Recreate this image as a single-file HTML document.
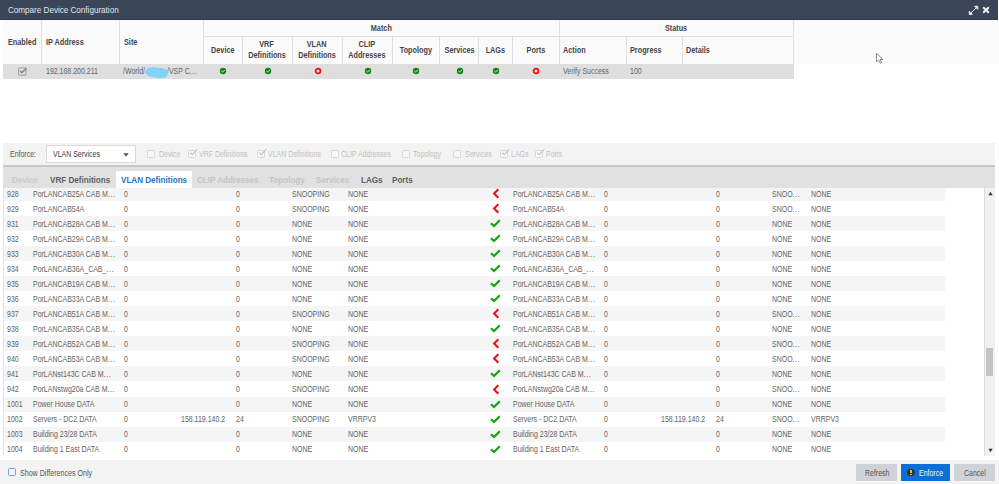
<!DOCTYPE html>
<html><head><meta charset="utf-8"><style>
html,body{margin:0;padding:0;width:999px;height:484px;overflow:hidden;background:#fff;font-family:"Liberation Sans",sans-serif;}
#root{position:relative;width:999px;height:484px;overflow:hidden;}
.abs{position:absolute;}
.t{position:absolute;line-height:20px;white-space:nowrap;transform:scaleX(0.8547);transform-origin:0 50%;}
.tc{position:absolute;line-height:20px;white-space:nowrap;text-align:center;}
.tc span{display:inline-block;transform:scaleX(0.8547);transform-origin:50% 50%;}
.el{font-style:normal;letter-spacing:0.7px;}
.vl{position:absolute;width:1px;background:#e0e0e0;}
.hl{position:absolute;height:1px;background:#e0e0e0;}
.ic{position:absolute;line-height:0;}
.ic svg{display:block;}
.cb{position:absolute;width:8px;height:8px;border:1px solid #d8d8d8;box-sizing:border-box;border-radius:1.5px;background:#f7f7f7;}
</style></head><body><div id="root">
<div class="abs" style="left:0;top:0;width:998px;height:20px;background:#3a4557"></div>
<div class="abs" style="left:0;top:19px;width:998px;height:1px;background:#343e4e"></div>
<span class="t" style="left:7.8px;top:-0.40px;font-size:9.48px;font-weight:normal;color:#e2e5e9;">Compare Device Configuration</span>
<svg class="abs" style="left:968px;top:4px" width="11" height="12" viewBox="0 0 11 12"><path d="M2.6 9.4 L8.4 3.6" stroke="#e8eaed" stroke-width="1"/><path d="M6.6 2.2 L9.8 2.2 L9.8 5.4 Z" fill="#eef0f2" stroke="#eef0f2" stroke-width="0.8" stroke-linejoin="round"/><path d="M1.2 7.2 L1.2 10.4 L4.4 10.4 Z" fill="#eef0f2" stroke="#eef0f2" stroke-width="0.8" stroke-linejoin="round"/></svg>
<svg class="abs" style="left:982px;top:6px" width="8" height="8" viewBox="0 0 8 8"><path d="M1.2 1.2 L6.8 6.8 M6.8 1.2 L1.2 6.8" stroke="#f2f2f2" stroke-width="2"/></svg>
<div class="abs" style="left:3px;top:20px;width:996px;height:43.5px;background:#fafafa"></div>
<div class="vl" style="left:41px;top:20px;height:43.5px"></div>
<div class="vl" style="left:119px;top:20px;height:43.5px"></div>
<div class="vl" style="left:203px;top:20px;height:43.5px"></div>
<div class="vl" style="left:559px;top:20px;height:43.5px"></div>
<div class="vl" style="left:793px;top:20px;height:58.5px"></div>
<div class="hl" style="left:203px;top:36px;width:590px"></div>
<div class="vl" style="left:242px;top:36px;height:27.5px"></div>
<div class="vl" style="left:292px;top:36px;height:27.5px"></div>
<div class="vl" style="left:342px;top:36px;height:27.5px"></div>
<div class="vl" style="left:392px;top:36px;height:27.5px"></div>
<div class="vl" style="left:439px;top:36px;height:27.5px"></div>
<div class="vl" style="left:478px;top:36px;height:27.5px"></div>
<div class="vl" style="left:512px;top:36px;height:27.5px"></div>
<div class="vl" style="left:626px;top:36px;height:27.5px"></div>
<div class="vl" style="left:682px;top:36px;height:27.5px"></div>
<div class="abs" style="left:3px;top:63.5px;width:790.5px;height:15px;background:#dedede"></div>
<span class="t" style="left:8px;top:31.50px;font-size:8.54px;font-weight:bold;color:#454545;">Enabled</span><span class="t" style="left:45.5px;top:31.50px;font-size:8.54px;font-weight:bold;color:#454545;">IP Address</span><span class="t" style="left:123.5px;top:31.50px;font-size:8.54px;font-weight:bold;color:#454545;">Site</span><span class="tc" style="left:203px;width:356px;top:18.00px;font-size:8.54px;font-weight:bold;color:#454545"><span>Match</span></span><span class="tc" style="left:559px;width:234px;top:18.00px;font-size:8.54px;font-weight:bold;color:#454545"><span>Status</span></span><span class="tc" style="left:203px;width:39px;top:40.00px;font-size:8.54px;font-weight:bold;color:#454545"><span>Device</span></span><span class="tc" style="left:242px;width:50px;top:34.00px;font-size:8.54px;font-weight:bold;color:#454545"><span>VRF</span></span><span class="tc" style="left:242px;width:50px;top:44.60px;font-size:8.54px;font-weight:bold;color:#454545"><span>Definitions</span></span><span class="tc" style="left:292px;width:50px;top:34.00px;font-size:8.54px;font-weight:bold;color:#454545"><span>VLAN</span></span><span class="tc" style="left:292px;width:50px;top:44.60px;font-size:8.54px;font-weight:bold;color:#454545"><span>Definitions</span></span><span class="tc" style="left:342px;width:50px;top:34.00px;font-size:8.54px;font-weight:bold;color:#454545"><span>CLIP</span></span><span class="tc" style="left:342px;width:50px;top:44.60px;font-size:8.54px;font-weight:bold;color:#454545"><span>Addresses</span></span><span class="tc" style="left:392px;width:47px;top:40.00px;font-size:8.54px;font-weight:bold;color:#454545"><span>Topology</span></span><span class="tc" style="left:440px;width:39px;top:40.00px;font-size:8.54px;font-weight:bold;color:#454545"><span>Services</span></span><span class="tc" style="left:479px;width:33px;top:40.00px;font-size:8.54px;font-weight:bold;color:#454545"><span>LAGs</span></span><span class="tc" style="left:512px;width:47px;top:40.00px;font-size:8.54px;font-weight:bold;color:#454545"><span>Ports</span></span><span class="t" style="left:563px;top:40.00px;font-size:8.54px;font-weight:bold;color:#454545;">Action</span><span class="t" style="left:630px;top:40.00px;font-size:8.54px;font-weight:bold;color:#454545;">Progress</span><span class="t" style="left:686px;top:40.00px;font-size:8.54px;font-weight:bold;color:#454545;">Details</span><span class="t" style="left:45.5px;top:61.60px;font-size:8.19px;font-weight:normal;color:#646464;">192.168.200.211</span><span class="t" style="left:123px;top:61.60px;font-size:8.19px;font-weight:normal;color:#646464;">/World/</span><span class="t" style="left:167px;top:61.60px;font-size:8.19px;font-weight:normal;color:#646464;">/VSP C<i class="el">...</i></span><span class="t" style="left:563px;top:61.60px;font-size:8.19px;font-weight:normal;color:#646464;">Verify Success</span><span class="t" style="left:630px;top:61.60px;font-size:8.19px;font-weight:normal;color:#646464;">100</span>
<svg class="abs" style="left:17.5px;top:66.5px" width="10" height="9" viewBox="0 0 10 9"><rect x="0.6" y="0.9" width="7.4" height="7.4" rx="1" fill="none" stroke="#9c9c9c" stroke-width="1"/><path d="M2.1 3.9 L3.9 5.7 L8.5 1.1" fill="none" stroke="#858585" stroke-width="1.5"/></svg>
<svg class="abs" style="left:144px;top:65.5px" width="25" height="13" viewBox="0 0 25 13"><path d="M2.5 3.6 C3.5 1.2 8 0.8 12 1.4 C16.5 2 21 2.2 23 4.2 C24.6 6 24 9.6 21.5 11 C18.5 12.4 14 12 9.5 11.2 C5 10.4 1.2 8.6 1.3 6 C1.3 5 1.8 4.2 2.5 3.6 Z" fill="#80d2fb"/></svg>
<span class="ic" style="left:219.2px;top:67px"><svg width="8" height="8" viewBox="0 0 8 8"><circle cx="4" cy="4" r="3.2" fill="#0f8a12"/><path d="M2.4 4.1 L3.6 5.1 L5.7 3" fill="none" stroke="#e8f3e8" stroke-width="0.9"/></svg></span><span class="ic" style="left:263.5px;top:67px"><svg width="8" height="8" viewBox="0 0 8 8"><circle cx="4" cy="4" r="3.2" fill="#0f8a12"/><path d="M2.4 4.1 L3.6 5.1 L5.7 3" fill="none" stroke="#e8f3e8" stroke-width="0.9"/></svg></span><span class="ic" style="left:313.6px;top:67px"><svg width="8" height="8" viewBox="0 0 8 8"><circle cx="4" cy="4" r="2.45" fill="none" stroke="#f01010" stroke-width="1.7"/></svg></span><span class="ic" style="left:363.6px;top:67px"><svg width="8" height="8" viewBox="0 0 8 8"><circle cx="4" cy="4" r="3.2" fill="#0f8a12"/><path d="M2.4 4.1 L3.6 5.1 L5.7 3" fill="none" stroke="#e8f3e8" stroke-width="0.9"/></svg></span><span class="ic" style="left:412.0px;top:67px"><svg width="8" height="8" viewBox="0 0 8 8"><circle cx="4" cy="4" r="3.2" fill="#0f8a12"/><path d="M2.4 4.1 L3.6 5.1 L5.7 3" fill="none" stroke="#e8f3e8" stroke-width="0.9"/></svg></span><span class="ic" style="left:455.5px;top:67px"><svg width="8" height="8" viewBox="0 0 8 8"><circle cx="4" cy="4" r="3.2" fill="#0f8a12"/><path d="M2.4 4.1 L3.6 5.1 L5.7 3" fill="none" stroke="#e8f3e8" stroke-width="0.9"/></svg></span><span class="ic" style="left:492.0px;top:67px"><svg width="8" height="8" viewBox="0 0 8 8"><circle cx="4" cy="4" r="3.2" fill="#0f8a12"/><path d="M2.4 4.1 L3.6 5.1 L5.7 3" fill="none" stroke="#e8f3e8" stroke-width="0.9"/></svg></span><span class="ic" style="left:532.0px;top:67px"><svg width="8" height="8" viewBox="0 0 8 8"><circle cx="4" cy="4" r="2.45" fill="none" stroke="#f01010" stroke-width="1.7"/></svg></span>
<svg class="abs" style="left:875.8px;top:52.8px" width="8" height="11" viewBox="0 0 8 11"><path d="M0.5 0.5 L0.5 9 L2.7 7 L4.3 10.3 L5.6 9.7 L4.1 6.5 L7 6.5 Z" fill="#fff" stroke="#707070" stroke-width="0.8"/></svg>

<div class="abs" style="left:3px;top:143px;width:992px;height:21.5px;background:#f3f3f3"></div>
<span class="t" style="left:10px;top:144.80px;font-size:8.19px;font-weight:normal;color:#555;">Enforce:</span>
<div class="abs" style="left:46px;top:145.3px;width:89.5px;height:17.6px;background:#fff;border:1px solid #dadada;box-sizing:border-box"></div>
<span class="t" style="left:52.5px;top:145.00px;font-size:8.19px;font-weight:normal;color:#3a3a3a;">VLAN Services</span>
<svg class="abs" style="left:123px;top:152.5px" width="6" height="4" viewBox="0 0 6 4"><path d="M0.2 0.2 L5.8 0.2 L3 3.4 Z" fill="#505050"/></svg>
<div class="cb" style="left:147px;top:149.6px"></div><span class="t" style="left:159px;top:145.00px;font-size:8.19px;font-weight:normal;color:#c2c2c2;">Device</span><div class="cb" style="left:188px;top:149.6px"></div><svg class="abs" style="left:189px;top:147.6px" width="9" height="9" viewBox="0 0 9 9"><path d="M1.2 4.6 L3.2 6.6 L8.4 1.2" fill="none" stroke="#c4c4c4" stroke-width="1.1"/></svg><span class="t" style="left:199px;top:145.00px;font-size:8.19px;font-weight:normal;color:#c2c2c2;">VRF Definitions</span><div class="cb" style="left:256.5px;top:149.6px"></div><svg class="abs" style="left:257.5px;top:147.6px" width="9" height="9" viewBox="0 0 9 9"><path d="M1.2 4.6 L3.2 6.6 L8.4 1.2" fill="none" stroke="#c4c4c4" stroke-width="1.1"/></svg><span class="t" style="left:268px;top:145.00px;font-size:8.19px;font-weight:normal;color:#c2c2c2;">VLAN Definitions</span><div class="cb" style="left:330.5px;top:149.6px"></div><span class="t" style="left:341px;top:145.00px;font-size:8.19px;font-weight:normal;color:#c2c2c2;">CLIP Addresses</span><div class="cb" style="left:402px;top:149.6px"></div><span class="t" style="left:413px;top:145.00px;font-size:8.19px;font-weight:normal;color:#c2c2c2;">Topology</span><div class="cb" style="left:453px;top:149.6px"></div><span class="t" style="left:465px;top:145.00px;font-size:8.19px;font-weight:normal;color:#c2c2c2;">Services</span><div class="cb" style="left:499.5px;top:149.6px"></div><svg class="abs" style="left:500.5px;top:147.6px" width="9" height="9" viewBox="0 0 9 9"><path d="M1.2 4.6 L3.2 6.6 L8.4 1.2" fill="none" stroke="#c4c4c4" stroke-width="1.1"/></svg><span class="t" style="left:511px;top:145.00px;font-size:8.19px;font-weight:normal;color:#c2c2c2;">LAGs</span><div class="cb" style="left:534.5px;top:149.6px"></div><svg class="abs" style="left:535.5px;top:147.6px" width="9" height="9" viewBox="0 0 9 9"><path d="M1.2 4.6 L3.2 6.6 L8.4 1.2" fill="none" stroke="#c4c4c4" stroke-width="1.1"/></svg><span class="t" style="left:546px;top:145.00px;font-size:8.19px;font-weight:normal;color:#c2c2c2;">Ports</span>
<div class="abs" style="left:3px;top:164.5px;width:992px;height:2.2px;background:#c9c9c9"></div>
<div class="abs" style="left:3px;top:166.7px;width:992px;height:21.3px;background:#e1e1e1"></div>
<div class="abs" style="left:116px;top:170.5px;width:76px;height:17.5px;background:#fff"></div><span class="t" style="left:12px;top:169.50px;font-size:9.48px;font-weight:bold;color:#c9c9c9;">Device</span><span class="t" style="left:49.5px;top:169.50px;font-size:9.48px;font-weight:bold;color:#5e5e5e;">VRF Definitions</span><span class="t" style="left:121px;top:169.50px;font-size:9.48px;font-weight:bold;color:#1a72ca;">VLAN Definitions</span><span class="t" style="left:197px;top:169.50px;font-size:9.48px;font-weight:bold;color:#c4c4c4;">CLIP Addresses</span><span class="t" style="left:269px;top:169.50px;font-size:9.48px;font-weight:bold;color:#c4c4c4;">Topology</span><span class="t" style="left:316px;top:169.50px;font-size:9.48px;font-weight:bold;color:#c4c4c4;">Services</span><span class="t" style="left:361px;top:169.50px;font-size:9.48px;font-weight:bold;color:#5e5e5e;">LAGs</span><span class="t" style="left:392px;top:169.50px;font-size:9.48px;font-weight:bold;color:#5e5e5e;">Ports</span>
<div class="abs" style="left:0;top:188px;width:999px;height:271.5px;overflow:hidden">
<div class="abs" style="left:0;top:-188px;width:999px;height:484px">
<div class="abs" style="left:3px;top:186px;width:992px;height:270px;background:#fff"></div>
<div class="abs" style="left:3px;top:186.0px;width:942px;height:15px;background:#f5f5f5"></div><span class="t" style="left:6.5px;top:184.60px;font-size:8.19px;font-weight:normal;color:#646464;">928</span><span class="t" style="left:32.5px;top:184.60px;font-size:8.19px;font-weight:normal;color:#646464;">PorLANCAB25A CAB M<i class="el">...</i></span><span class="t" style="left:124.0px;top:184.60px;font-size:8.19px;font-weight:normal;color:#646464;">0</span><span class="t" style="left:236px;top:184.60px;font-size:8.19px;font-weight:normal;color:#646464;">0</span><span class="t" style="left:292px;top:184.60px;font-size:8.19px;font-weight:normal;color:#646464;">SNOOPING</span><span class="t" style="left:347.5px;top:184.60px;font-size:8.19px;font-weight:normal;color:#646464;">NONE</span><span class="t" style="left:512.5px;top:184.60px;font-size:8.19px;font-weight:normal;color:#646464;">PorLANCAB25A CAB M<i class="el">...</i></span><span class="t" style="left:604.48px;top:184.60px;font-size:8.19px;font-weight:normal;color:#646464;">0</span><span class="t" style="left:716px;top:184.60px;font-size:8.19px;font-weight:normal;color:#646464;">0</span><span class="t" style="left:772px;top:184.60px;font-size:8.19px;font-weight:normal;color:#646464;">SNOO<i class="el">...</i></span><span class="t" style="left:810.5px;top:184.60px;font-size:8.19px;font-weight:normal;color:#646464;">NONE</span><span class="ic" style="left:492px;top:188.0px"><svg width="8" height="11" viewBox="0 0 8 11"><path d="M6.3 1.2 L2.1 5.5 L6.3 9.8" fill="none" stroke="#ee1111" stroke-width="2.1" stroke-linejoin="miter"/></svg></span><div class="abs" style="left:3px;top:201.04px;width:942px;height:15px;background:#ffffff"></div><span class="t" style="left:6.5px;top:199.64px;font-size:8.19px;font-weight:normal;color:#646464;">929</span><span class="t" style="left:32.5px;top:199.64px;font-size:8.19px;font-weight:normal;color:#646464;">PorLANCAB54A</span><span class="t" style="left:124.0px;top:199.64px;font-size:8.19px;font-weight:normal;color:#646464;">0</span><span class="t" style="left:236px;top:199.64px;font-size:8.19px;font-weight:normal;color:#646464;">0</span><span class="t" style="left:292px;top:199.64px;font-size:8.19px;font-weight:normal;color:#646464;">SNOOPING</span><span class="t" style="left:347.5px;top:199.64px;font-size:8.19px;font-weight:normal;color:#646464;">NONE</span><span class="t" style="left:512.5px;top:199.64px;font-size:8.19px;font-weight:normal;color:#646464;">PorLANCAB54A</span><span class="t" style="left:604.48px;top:199.64px;font-size:8.19px;font-weight:normal;color:#646464;">0</span><span class="t" style="left:716px;top:199.64px;font-size:8.19px;font-weight:normal;color:#646464;">0</span><span class="t" style="left:772px;top:199.64px;font-size:8.19px;font-weight:normal;color:#646464;">SNOO<i class="el">...</i></span><span class="t" style="left:810.5px;top:199.64px;font-size:8.19px;font-weight:normal;color:#646464;">NONE</span><span class="ic" style="left:492px;top:203.04px"><svg width="8" height="11" viewBox="0 0 8 11"><path d="M6.3 1.2 L2.1 5.5 L6.3 9.8" fill="none" stroke="#ee1111" stroke-width="2.1" stroke-linejoin="miter"/></svg></span><div class="abs" style="left:3px;top:216.08px;width:942px;height:15px;background:#f5f5f5"></div><span class="t" style="left:6.5px;top:214.68px;font-size:8.19px;font-weight:normal;color:#646464;">931</span><span class="t" style="left:32.5px;top:214.68px;font-size:8.19px;font-weight:normal;color:#646464;">PorLANCAB28A CAB M<i class="el">...</i></span><span class="t" style="left:124.0px;top:214.68px;font-size:8.19px;font-weight:normal;color:#646464;">0</span><span class="t" style="left:236px;top:214.68px;font-size:8.19px;font-weight:normal;color:#646464;">0</span><span class="t" style="left:292px;top:214.68px;font-size:8.19px;font-weight:normal;color:#646464;">NONE</span><span class="t" style="left:347.5px;top:214.68px;font-size:8.19px;font-weight:normal;color:#646464;">NONE</span><span class="t" style="left:512.5px;top:214.68px;font-size:8.19px;font-weight:normal;color:#646464;">PorLANCAB28A CAB M<i class="el">...</i></span><span class="t" style="left:604.48px;top:214.68px;font-size:8.19px;font-weight:normal;color:#646464;">0</span><span class="t" style="left:716px;top:214.68px;font-size:8.19px;font-weight:normal;color:#646464;">0</span><span class="t" style="left:772px;top:214.68px;font-size:8.19px;font-weight:normal;color:#646464;">NONE</span><span class="t" style="left:810.5px;top:214.68px;font-size:8.19px;font-weight:normal;color:#646464;">NONE</span><span class="ic" style="left:490px;top:219.08px"><svg width="11" height="9" viewBox="0 0 11 9"><path d="M1 4.3 L4 7 L9.8 1.3" fill="none" stroke="#13a313" stroke-width="2.2"/></svg></span><div class="abs" style="left:3px;top:231.12px;width:942px;height:15px;background:#ffffff"></div><span class="t" style="left:6.5px;top:229.72px;font-size:8.19px;font-weight:normal;color:#646464;">932</span><span class="t" style="left:32.5px;top:229.72px;font-size:8.19px;font-weight:normal;color:#646464;">PorLANCAB29A CAB M<i class="el">...</i></span><span class="t" style="left:124.0px;top:229.72px;font-size:8.19px;font-weight:normal;color:#646464;">0</span><span class="t" style="left:236px;top:229.72px;font-size:8.19px;font-weight:normal;color:#646464;">0</span><span class="t" style="left:292px;top:229.72px;font-size:8.19px;font-weight:normal;color:#646464;">NONE</span><span class="t" style="left:347.5px;top:229.72px;font-size:8.19px;font-weight:normal;color:#646464;">NONE</span><span class="t" style="left:512.5px;top:229.72px;font-size:8.19px;font-weight:normal;color:#646464;">PorLANCAB29A CAB M<i class="el">...</i></span><span class="t" style="left:604.48px;top:229.72px;font-size:8.19px;font-weight:normal;color:#646464;">0</span><span class="t" style="left:716px;top:229.72px;font-size:8.19px;font-weight:normal;color:#646464;">0</span><span class="t" style="left:772px;top:229.72px;font-size:8.19px;font-weight:normal;color:#646464;">NONE</span><span class="t" style="left:810.5px;top:229.72px;font-size:8.19px;font-weight:normal;color:#646464;">NONE</span><span class="ic" style="left:490px;top:234.12px"><svg width="11" height="9" viewBox="0 0 11 9"><path d="M1 4.3 L4 7 L9.8 1.3" fill="none" stroke="#13a313" stroke-width="2.2"/></svg></span><div class="abs" style="left:3px;top:246.16px;width:942px;height:15px;background:#f5f5f5"></div><span class="t" style="left:6.5px;top:244.76px;font-size:8.19px;font-weight:normal;color:#646464;">933</span><span class="t" style="left:32.5px;top:244.76px;font-size:8.19px;font-weight:normal;color:#646464;">PorLANCAB30A CAB M<i class="el">...</i></span><span class="t" style="left:124.0px;top:244.76px;font-size:8.19px;font-weight:normal;color:#646464;">0</span><span class="t" style="left:236px;top:244.76px;font-size:8.19px;font-weight:normal;color:#646464;">0</span><span class="t" style="left:292px;top:244.76px;font-size:8.19px;font-weight:normal;color:#646464;">NONE</span><span class="t" style="left:347.5px;top:244.76px;font-size:8.19px;font-weight:normal;color:#646464;">NONE</span><span class="t" style="left:512.5px;top:244.76px;font-size:8.19px;font-weight:normal;color:#646464;">PorLANCAB30A CAB M<i class="el">...</i></span><span class="t" style="left:604.48px;top:244.76px;font-size:8.19px;font-weight:normal;color:#646464;">0</span><span class="t" style="left:716px;top:244.76px;font-size:8.19px;font-weight:normal;color:#646464;">0</span><span class="t" style="left:772px;top:244.76px;font-size:8.19px;font-weight:normal;color:#646464;">NONE</span><span class="t" style="left:810.5px;top:244.76px;font-size:8.19px;font-weight:normal;color:#646464;">NONE</span><span class="ic" style="left:490px;top:249.16px"><svg width="11" height="9" viewBox="0 0 11 9"><path d="M1 4.3 L4 7 L9.8 1.3" fill="none" stroke="#13a313" stroke-width="2.2"/></svg></span><div class="abs" style="left:3px;top:261.2px;width:942px;height:15px;background:#ffffff"></div><span class="t" style="left:6.5px;top:259.80px;font-size:8.19px;font-weight:normal;color:#646464;">934</span><span class="t" style="left:32.5px;top:259.80px;font-size:8.19px;font-weight:normal;color:#646464;">PorLANCAB36A_CAB_<i class="el">...</i></span><span class="t" style="left:124.0px;top:259.80px;font-size:8.19px;font-weight:normal;color:#646464;">0</span><span class="t" style="left:236px;top:259.80px;font-size:8.19px;font-weight:normal;color:#646464;">0</span><span class="t" style="left:292px;top:259.80px;font-size:8.19px;font-weight:normal;color:#646464;">NONE</span><span class="t" style="left:347.5px;top:259.80px;font-size:8.19px;font-weight:normal;color:#646464;">NONE</span><span class="t" style="left:512.5px;top:259.80px;font-size:8.19px;font-weight:normal;color:#646464;">PorLANCAB36A_CAB_<i class="el">...</i></span><span class="t" style="left:604.48px;top:259.80px;font-size:8.19px;font-weight:normal;color:#646464;">0</span><span class="t" style="left:716px;top:259.80px;font-size:8.19px;font-weight:normal;color:#646464;">0</span><span class="t" style="left:772px;top:259.80px;font-size:8.19px;font-weight:normal;color:#646464;">NONE</span><span class="t" style="left:810.5px;top:259.80px;font-size:8.19px;font-weight:normal;color:#646464;">NONE</span><span class="ic" style="left:490px;top:264.2px"><svg width="11" height="9" viewBox="0 0 11 9"><path d="M1 4.3 L4 7 L9.8 1.3" fill="none" stroke="#13a313" stroke-width="2.2"/></svg></span><div class="abs" style="left:3px;top:276.24px;width:942px;height:15px;background:#f5f5f5"></div><span class="t" style="left:6.5px;top:274.84px;font-size:8.19px;font-weight:normal;color:#646464;">935</span><span class="t" style="left:32.5px;top:274.84px;font-size:8.19px;font-weight:normal;color:#646464;">PorLANCAB19A CAB M<i class="el">...</i></span><span class="t" style="left:124.0px;top:274.84px;font-size:8.19px;font-weight:normal;color:#646464;">0</span><span class="t" style="left:236px;top:274.84px;font-size:8.19px;font-weight:normal;color:#646464;">0</span><span class="t" style="left:292px;top:274.84px;font-size:8.19px;font-weight:normal;color:#646464;">NONE</span><span class="t" style="left:347.5px;top:274.84px;font-size:8.19px;font-weight:normal;color:#646464;">NONE</span><span class="t" style="left:512.5px;top:274.84px;font-size:8.19px;font-weight:normal;color:#646464;">PorLANCAB19A CAB M<i class="el">...</i></span><span class="t" style="left:604.48px;top:274.84px;font-size:8.19px;font-weight:normal;color:#646464;">0</span><span class="t" style="left:716px;top:274.84px;font-size:8.19px;font-weight:normal;color:#646464;">0</span><span class="t" style="left:772px;top:274.84px;font-size:8.19px;font-weight:normal;color:#646464;">NONE</span><span class="t" style="left:810.5px;top:274.84px;font-size:8.19px;font-weight:normal;color:#646464;">NONE</span><span class="ic" style="left:490px;top:279.24px"><svg width="11" height="9" viewBox="0 0 11 9"><path d="M1 4.3 L4 7 L9.8 1.3" fill="none" stroke="#13a313" stroke-width="2.2"/></svg></span><div class="abs" style="left:3px;top:291.28px;width:942px;height:15px;background:#ffffff"></div><span class="t" style="left:6.5px;top:289.88px;font-size:8.19px;font-weight:normal;color:#646464;">936</span><span class="t" style="left:32.5px;top:289.88px;font-size:8.19px;font-weight:normal;color:#646464;">PorLANCAB33A CAB M<i class="el">...</i></span><span class="t" style="left:124.0px;top:289.88px;font-size:8.19px;font-weight:normal;color:#646464;">0</span><span class="t" style="left:236px;top:289.88px;font-size:8.19px;font-weight:normal;color:#646464;">0</span><span class="t" style="left:292px;top:289.88px;font-size:8.19px;font-weight:normal;color:#646464;">NONE</span><span class="t" style="left:347.5px;top:289.88px;font-size:8.19px;font-weight:normal;color:#646464;">NONE</span><span class="t" style="left:512.5px;top:289.88px;font-size:8.19px;font-weight:normal;color:#646464;">PorLANCAB33A CAB M<i class="el">...</i></span><span class="t" style="left:604.48px;top:289.88px;font-size:8.19px;font-weight:normal;color:#646464;">0</span><span class="t" style="left:716px;top:289.88px;font-size:8.19px;font-weight:normal;color:#646464;">0</span><span class="t" style="left:772px;top:289.88px;font-size:8.19px;font-weight:normal;color:#646464;">NONE</span><span class="t" style="left:810.5px;top:289.88px;font-size:8.19px;font-weight:normal;color:#646464;">NONE</span><span class="ic" style="left:490px;top:294.28px"><svg width="11" height="9" viewBox="0 0 11 9"><path d="M1 4.3 L4 7 L9.8 1.3" fill="none" stroke="#13a313" stroke-width="2.2"/></svg></span><div class="abs" style="left:3px;top:306.32px;width:942px;height:15px;background:#f5f5f5"></div><span class="t" style="left:6.5px;top:304.92px;font-size:8.19px;font-weight:normal;color:#646464;">937</span><span class="t" style="left:32.5px;top:304.92px;font-size:8.19px;font-weight:normal;color:#646464;">PorLANCAB51A CAB M<i class="el">...</i></span><span class="t" style="left:124.0px;top:304.92px;font-size:8.19px;font-weight:normal;color:#646464;">0</span><span class="t" style="left:236px;top:304.92px;font-size:8.19px;font-weight:normal;color:#646464;">0</span><span class="t" style="left:292px;top:304.92px;font-size:8.19px;font-weight:normal;color:#646464;">SNOOPING</span><span class="t" style="left:347.5px;top:304.92px;font-size:8.19px;font-weight:normal;color:#646464;">NONE</span><span class="t" style="left:512.5px;top:304.92px;font-size:8.19px;font-weight:normal;color:#646464;">PorLANCAB51A CAB M<i class="el">...</i></span><span class="t" style="left:604.48px;top:304.92px;font-size:8.19px;font-weight:normal;color:#646464;">0</span><span class="t" style="left:716px;top:304.92px;font-size:8.19px;font-weight:normal;color:#646464;">0</span><span class="t" style="left:772px;top:304.92px;font-size:8.19px;font-weight:normal;color:#646464;">SNOO<i class="el">...</i></span><span class="t" style="left:810.5px;top:304.92px;font-size:8.19px;font-weight:normal;color:#646464;">NONE</span><span class="ic" style="left:492px;top:308.32px"><svg width="8" height="11" viewBox="0 0 8 11"><path d="M6.3 1.2 L2.1 5.5 L6.3 9.8" fill="none" stroke="#ee1111" stroke-width="2.1" stroke-linejoin="miter"/></svg></span><div class="abs" style="left:3px;top:321.36px;width:942px;height:15px;background:#ffffff"></div><span class="t" style="left:6.5px;top:319.96px;font-size:8.19px;font-weight:normal;color:#646464;">938</span><span class="t" style="left:32.5px;top:319.96px;font-size:8.19px;font-weight:normal;color:#646464;">PorLANCAB35A CAB M<i class="el">...</i></span><span class="t" style="left:124.0px;top:319.96px;font-size:8.19px;font-weight:normal;color:#646464;">0</span><span class="t" style="left:236px;top:319.96px;font-size:8.19px;font-weight:normal;color:#646464;">0</span><span class="t" style="left:292px;top:319.96px;font-size:8.19px;font-weight:normal;color:#646464;">NONE</span><span class="t" style="left:347.5px;top:319.96px;font-size:8.19px;font-weight:normal;color:#646464;">NONE</span><span class="t" style="left:512.5px;top:319.96px;font-size:8.19px;font-weight:normal;color:#646464;">PorLANCAB35A CAB M<i class="el">...</i></span><span class="t" style="left:604.48px;top:319.96px;font-size:8.19px;font-weight:normal;color:#646464;">0</span><span class="t" style="left:716px;top:319.96px;font-size:8.19px;font-weight:normal;color:#646464;">0</span><span class="t" style="left:772px;top:319.96px;font-size:8.19px;font-weight:normal;color:#646464;">NONE</span><span class="t" style="left:810.5px;top:319.96px;font-size:8.19px;font-weight:normal;color:#646464;">NONE</span><span class="ic" style="left:490px;top:324.36px"><svg width="11" height="9" viewBox="0 0 11 9"><path d="M1 4.3 L4 7 L9.8 1.3" fill="none" stroke="#13a313" stroke-width="2.2"/></svg></span><div class="abs" style="left:3px;top:336.4px;width:942px;height:15px;background:#f5f5f5"></div><span class="t" style="left:6.5px;top:335.00px;font-size:8.19px;font-weight:normal;color:#646464;">939</span><span class="t" style="left:32.5px;top:335.00px;font-size:8.19px;font-weight:normal;color:#646464;">PorLANCAB52A CAB M<i class="el">...</i></span><span class="t" style="left:124.0px;top:335.00px;font-size:8.19px;font-weight:normal;color:#646464;">0</span><span class="t" style="left:236px;top:335.00px;font-size:8.19px;font-weight:normal;color:#646464;">0</span><span class="t" style="left:292px;top:335.00px;font-size:8.19px;font-weight:normal;color:#646464;">SNOOPING</span><span class="t" style="left:347.5px;top:335.00px;font-size:8.19px;font-weight:normal;color:#646464;">NONE</span><span class="t" style="left:512.5px;top:335.00px;font-size:8.19px;font-weight:normal;color:#646464;">PorLANCAB52A CAB M<i class="el">...</i></span><span class="t" style="left:604.48px;top:335.00px;font-size:8.19px;font-weight:normal;color:#646464;">0</span><span class="t" style="left:716px;top:335.00px;font-size:8.19px;font-weight:normal;color:#646464;">0</span><span class="t" style="left:772px;top:335.00px;font-size:8.19px;font-weight:normal;color:#646464;">SNOO<i class="el">...</i></span><span class="t" style="left:810.5px;top:335.00px;font-size:8.19px;font-weight:normal;color:#646464;">NONE</span><span class="ic" style="left:492px;top:338.4px"><svg width="8" height="11" viewBox="0 0 8 11"><path d="M6.3 1.2 L2.1 5.5 L6.3 9.8" fill="none" stroke="#ee1111" stroke-width="2.1" stroke-linejoin="miter"/></svg></span><div class="abs" style="left:3px;top:351.44px;width:942px;height:15px;background:#ffffff"></div><span class="t" style="left:6.5px;top:350.04px;font-size:8.19px;font-weight:normal;color:#646464;">940</span><span class="t" style="left:32.5px;top:350.04px;font-size:8.19px;font-weight:normal;color:#646464;">PorLANCAB53A CAB M<i class="el">...</i></span><span class="t" style="left:124.0px;top:350.04px;font-size:8.19px;font-weight:normal;color:#646464;">0</span><span class="t" style="left:236px;top:350.04px;font-size:8.19px;font-weight:normal;color:#646464;">0</span><span class="t" style="left:292px;top:350.04px;font-size:8.19px;font-weight:normal;color:#646464;">SNOOPING</span><span class="t" style="left:347.5px;top:350.04px;font-size:8.19px;font-weight:normal;color:#646464;">NONE</span><span class="t" style="left:512.5px;top:350.04px;font-size:8.19px;font-weight:normal;color:#646464;">PorLANCAB53A CAB M<i class="el">...</i></span><span class="t" style="left:604.48px;top:350.04px;font-size:8.19px;font-weight:normal;color:#646464;">0</span><span class="t" style="left:716px;top:350.04px;font-size:8.19px;font-weight:normal;color:#646464;">0</span><span class="t" style="left:772px;top:350.04px;font-size:8.19px;font-weight:normal;color:#646464;">SNOO<i class="el">...</i></span><span class="t" style="left:810.5px;top:350.04px;font-size:8.19px;font-weight:normal;color:#646464;">NONE</span><span class="ic" style="left:492px;top:353.44px"><svg width="8" height="11" viewBox="0 0 8 11"><path d="M6.3 1.2 L2.1 5.5 L6.3 9.8" fill="none" stroke="#ee1111" stroke-width="2.1" stroke-linejoin="miter"/></svg></span><div class="abs" style="left:3px;top:366.48px;width:942px;height:15px;background:#f5f5f5"></div><span class="t" style="left:6.5px;top:365.08px;font-size:8.19px;font-weight:normal;color:#646464;">941</span><span class="t" style="left:32.5px;top:365.08px;font-size:8.19px;font-weight:normal;color:#646464;">PorLANst143C CAB M<i class="el">...</i></span><span class="t" style="left:124.0px;top:365.08px;font-size:8.19px;font-weight:normal;color:#646464;">0</span><span class="t" style="left:236px;top:365.08px;font-size:8.19px;font-weight:normal;color:#646464;">0</span><span class="t" style="left:292px;top:365.08px;font-size:8.19px;font-weight:normal;color:#646464;">NONE</span><span class="t" style="left:347.5px;top:365.08px;font-size:8.19px;font-weight:normal;color:#646464;">NONE</span><span class="t" style="left:512.5px;top:365.08px;font-size:8.19px;font-weight:normal;color:#646464;">PorLANst143C CAB M<i class="el">...</i></span><span class="t" style="left:604.48px;top:365.08px;font-size:8.19px;font-weight:normal;color:#646464;">0</span><span class="t" style="left:716px;top:365.08px;font-size:8.19px;font-weight:normal;color:#646464;">0</span><span class="t" style="left:772px;top:365.08px;font-size:8.19px;font-weight:normal;color:#646464;">NONE</span><span class="t" style="left:810.5px;top:365.08px;font-size:8.19px;font-weight:normal;color:#646464;">NONE</span><span class="ic" style="left:490px;top:369.48px"><svg width="11" height="9" viewBox="0 0 11 9"><path d="M1 4.3 L4 7 L9.8 1.3" fill="none" stroke="#13a313" stroke-width="2.2"/></svg></span><div class="abs" style="left:3px;top:381.52px;width:942px;height:15px;background:#ffffff"></div><span class="t" style="left:6.5px;top:380.12px;font-size:8.19px;font-weight:normal;color:#646464;">942</span><span class="t" style="left:32.5px;top:380.12px;font-size:8.19px;font-weight:normal;color:#646464;">PorLANstwg20a CAB M<i class="el">...</i></span><span class="t" style="left:124.0px;top:380.12px;font-size:8.19px;font-weight:normal;color:#646464;">0</span><span class="t" style="left:236px;top:380.12px;font-size:8.19px;font-weight:normal;color:#646464;">0</span><span class="t" style="left:292px;top:380.12px;font-size:8.19px;font-weight:normal;color:#646464;">SNOOPING</span><span class="t" style="left:347.5px;top:380.12px;font-size:8.19px;font-weight:normal;color:#646464;">NONE</span><span class="t" style="left:512.5px;top:380.12px;font-size:8.19px;font-weight:normal;color:#646464;">PorLANstwg20a CAB M<i class="el">...</i></span><span class="t" style="left:604.48px;top:380.12px;font-size:8.19px;font-weight:normal;color:#646464;">0</span><span class="t" style="left:716px;top:380.12px;font-size:8.19px;font-weight:normal;color:#646464;">0</span><span class="t" style="left:772px;top:380.12px;font-size:8.19px;font-weight:normal;color:#646464;">SNOO<i class="el">...</i></span><span class="t" style="left:810.5px;top:380.12px;font-size:8.19px;font-weight:normal;color:#646464;">NONE</span><span class="ic" style="left:492px;top:383.52px"><svg width="8" height="11" viewBox="0 0 8 11"><path d="M6.3 1.2 L2.1 5.5 L6.3 9.8" fill="none" stroke="#ee1111" stroke-width="2.1" stroke-linejoin="miter"/></svg></span><div class="abs" style="left:3px;top:396.56px;width:942px;height:15px;background:#f5f5f5"></div><span class="t" style="left:6.5px;top:395.16px;font-size:8.19px;font-weight:normal;color:#646464;">1001</span><span class="t" style="left:32.5px;top:395.16px;font-size:8.19px;font-weight:normal;color:#646464;">Power House DATA</span><span class="t" style="left:124.0px;top:395.16px;font-size:8.19px;font-weight:normal;color:#646464;">0</span><span class="t" style="left:236px;top:395.16px;font-size:8.19px;font-weight:normal;color:#646464;">0</span><span class="t" style="left:292px;top:395.16px;font-size:8.19px;font-weight:normal;color:#646464;">NONE</span><span class="t" style="left:347.5px;top:395.16px;font-size:8.19px;font-weight:normal;color:#646464;">NONE</span><span class="t" style="left:512.5px;top:395.16px;font-size:8.19px;font-weight:normal;color:#646464;">Power House DATA</span><span class="t" style="left:604.48px;top:395.16px;font-size:8.19px;font-weight:normal;color:#646464;">0</span><span class="t" style="left:716px;top:395.16px;font-size:8.19px;font-weight:normal;color:#646464;">0</span><span class="t" style="left:772px;top:395.16px;font-size:8.19px;font-weight:normal;color:#646464;">NONE</span><span class="t" style="left:810.5px;top:395.16px;font-size:8.19px;font-weight:normal;color:#646464;">NONE</span><span class="ic" style="left:490px;top:399.56px"><svg width="11" height="9" viewBox="0 0 11 9"><path d="M1 4.3 L4 7 L9.8 1.3" fill="none" stroke="#13a313" stroke-width="2.2"/></svg></span><div class="abs" style="left:3px;top:411.6px;width:942px;height:15px;background:#ffffff"></div><span class="t" style="left:6.5px;top:410.20px;font-size:8.19px;font-weight:normal;color:#646464;">1002</span><span class="t" style="left:32.5px;top:410.20px;font-size:8.19px;font-weight:normal;color:#646464;">Servers - DC2 DATA</span><span class="t" style="left:124.0px;top:410.20px;font-size:8.19px;font-weight:normal;color:#646464;">0</span><span class="t" style="left:180.7px;top:410.20px;font-size:8.19px;font-weight:normal;color:#646464;">158.119.140.2</span><span class="t" style="left:236px;top:410.20px;font-size:8.19px;font-weight:normal;color:#646464;">24</span><span class="t" style="left:292px;top:410.20px;font-size:8.19px;font-weight:normal;color:#646464;">SNOOPING</span><span class="t" style="left:347.5px;top:410.20px;font-size:8.19px;font-weight:normal;color:#646464;">VRRPV3</span><span class="t" style="left:512.5px;top:410.20px;font-size:8.19px;font-weight:normal;color:#646464;">Servers - DC2 DATA</span><span class="t" style="left:604.48px;top:410.20px;font-size:8.19px;font-weight:normal;color:#646464;">0</span><span class="t" style="left:660.7px;top:410.20px;font-size:8.19px;font-weight:normal;color:#646464;">158.119.140.2</span><span class="t" style="left:716px;top:410.20px;font-size:8.19px;font-weight:normal;color:#646464;">24</span><span class="t" style="left:772px;top:410.20px;font-size:8.19px;font-weight:normal;color:#646464;">SNOO<i class="el">...</i></span><span class="t" style="left:810.5px;top:410.20px;font-size:8.19px;font-weight:normal;color:#646464;">VRRPV3</span><span class="ic" style="left:490px;top:414.6px"><svg width="11" height="9" viewBox="0 0 11 9"><path d="M1 4.3 L4 7 L9.8 1.3" fill="none" stroke="#13a313" stroke-width="2.2"/></svg></span><div class="abs" style="left:3px;top:426.64px;width:942px;height:15px;background:#f5f5f5"></div><span class="t" style="left:6.5px;top:425.24px;font-size:8.19px;font-weight:normal;color:#646464;">1003</span><span class="t" style="left:32.5px;top:425.24px;font-size:8.19px;font-weight:normal;color:#646464;">Building 23/28 DATA</span><span class="t" style="left:124.0px;top:425.24px;font-size:8.19px;font-weight:normal;color:#646464;">0</span><span class="t" style="left:236px;top:425.24px;font-size:8.19px;font-weight:normal;color:#646464;">0</span><span class="t" style="left:292px;top:425.24px;font-size:8.19px;font-weight:normal;color:#646464;">NONE</span><span class="t" style="left:347.5px;top:425.24px;font-size:8.19px;font-weight:normal;color:#646464;">NONE</span><span class="t" style="left:512.5px;top:425.24px;font-size:8.19px;font-weight:normal;color:#646464;">Building 23/28 DATA</span><span class="t" style="left:604.48px;top:425.24px;font-size:8.19px;font-weight:normal;color:#646464;">0</span><span class="t" style="left:716px;top:425.24px;font-size:8.19px;font-weight:normal;color:#646464;">0</span><span class="t" style="left:772px;top:425.24px;font-size:8.19px;font-weight:normal;color:#646464;">NONE</span><span class="t" style="left:810.5px;top:425.24px;font-size:8.19px;font-weight:normal;color:#646464;">NONE</span><span class="ic" style="left:490px;top:429.64px"><svg width="11" height="9" viewBox="0 0 11 9"><path d="M1 4.3 L4 7 L9.8 1.3" fill="none" stroke="#13a313" stroke-width="2.2"/></svg></span><div class="abs" style="left:3px;top:441.68px;width:942px;height:15px;background:#ffffff"></div><span class="t" style="left:6.5px;top:440.28px;font-size:8.19px;font-weight:normal;color:#646464;">1004</span><span class="t" style="left:32.5px;top:440.28px;font-size:8.19px;font-weight:normal;color:#646464;">Building 1 East DATA</span><span class="t" style="left:124.0px;top:440.28px;font-size:8.19px;font-weight:normal;color:#646464;">0</span><span class="t" style="left:236px;top:440.28px;font-size:8.19px;font-weight:normal;color:#646464;">0</span><span class="t" style="left:292px;top:440.28px;font-size:8.19px;font-weight:normal;color:#646464;">NONE</span><span class="t" style="left:347.5px;top:440.28px;font-size:8.19px;font-weight:normal;color:#646464;">NONE</span><span class="t" style="left:512.5px;top:440.28px;font-size:8.19px;font-weight:normal;color:#646464;">Building 1 East DATA</span><span class="t" style="left:604.48px;top:440.28px;font-size:8.19px;font-weight:normal;color:#646464;">0</span><span class="t" style="left:716px;top:440.28px;font-size:8.19px;font-weight:normal;color:#646464;">0</span><span class="t" style="left:772px;top:440.28px;font-size:8.19px;font-weight:normal;color:#646464;">NONE</span><span class="t" style="left:810.5px;top:440.28px;font-size:8.19px;font-weight:normal;color:#646464;">NONE</span><span class="ic" style="left:490px;top:444.68px"><svg width="11" height="9" viewBox="0 0 11 9"><path d="M1 4.3 L4 7 L9.8 1.3" fill="none" stroke="#13a313" stroke-width="2.2"/></svg></span>
</div></div>
<div class="abs" style="left:3px;top:188px;width:1px;height:267px;background:#e2e2e2"></div>
<div class="abs" style="left:984px;top:188px;width:11px;height:268px;background:#f1f1f1;border-left:1px solid #dcdcdc;box-sizing:border-box"></div>
<svg class="abs" style="left:987.5px;top:190.5px" width="6" height="5" viewBox="0 0 6 5"><path d="M0.8 4.1 L2.5 1.2 L4.2 4.1 Z" fill="#333" stroke="#333" stroke-width="0.5" stroke-linejoin="round"/></svg>
<svg class="abs" style="left:987.5px;top:448px" width="6" height="5" viewBox="0 0 6 5"><path d="M0.8 0.9 L2.5 3.8 L4.2 0.9 Z" fill="#333" stroke="#333" stroke-width="0.5" stroke-linejoin="round"/></svg>
<div class="abs" style="left:986px;top:348px;width:7px;height:28px;background:#c3c3c3"></div>
<div class="abs" style="left:0;top:459.5px;width:999px;height:25px;background:#f3f3f3"></div>
<div class="abs" style="left:8.2px;top:468px;width:8.3px;height:8.3px;border:1px solid #67a4e8;border-radius:1.5px;box-sizing:border-box;background:#f6f6f6"></div>
<span class="t" style="left:20.2px;top:463.20px;font-size:8.31px;font-weight:normal;color:#555;">Show Differences Only</span>
<div class="abs" style="left:855.5px;top:463.5px;width:41.5px;height:17.5px;background:#cfd2d6"></div>
<span class="t" style="left:864.6px;top:463.50px;font-size:8.19px;font-weight:normal;color:#585858;">Refresh</span>
<div class="abs" style="left:900.5px;top:463.5px;width:49.5px;height:17.5px;background:#0b6fd3"></div>
<span class="abs" style="left:907.4px;top:468.6px;width:7.2px;height:7.2px;border-radius:50%;background:#2c3440"></span>
<span class="abs" style="left:910.4px;top:470px;width:1.3px;height:3px;background:#f0c000"></span>
<span class="abs" style="left:910.4px;top:473.6px;width:1.3px;height:1.1px;background:#f0c000"></span>
<span class="t" style="left:918.6px;top:463.50px;font-size:8.19px;font-weight:normal;color:#f4f7fb;">Enforce</span>
<div class="abs" style="left:953.5px;top:463.5px;width:41.5px;height:17.5px;background:#cfd2d6"></div>
<span class="t" style="left:963.6px;top:463.50px;font-size:8.19px;font-weight:normal;color:#585858;">Cancel</span>
</div></body></html>
